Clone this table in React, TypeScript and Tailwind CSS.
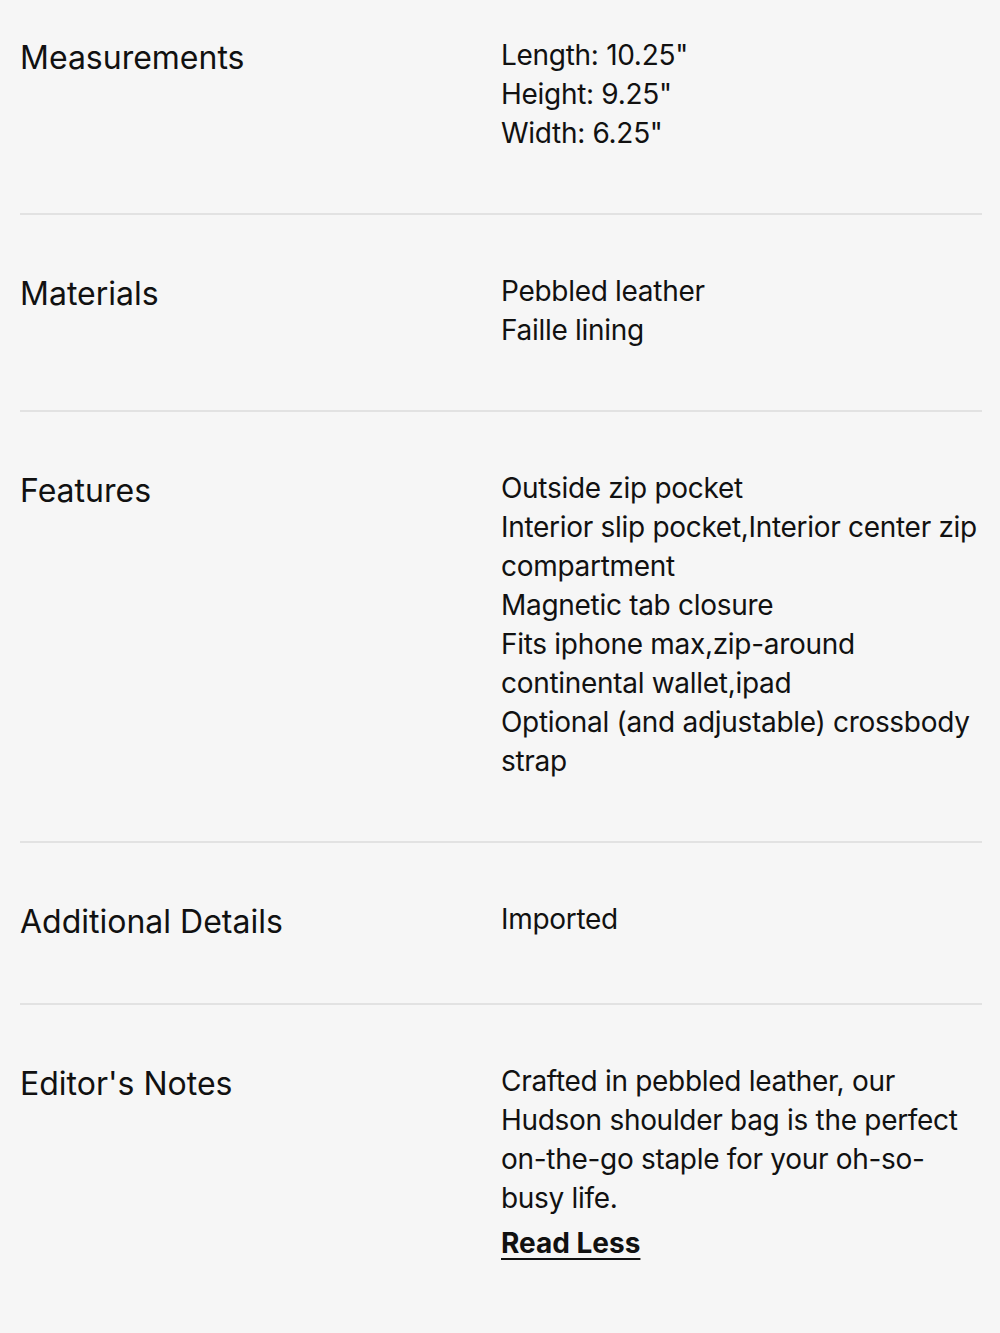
import type { ReactNode } from "react";

type Spec = {
    label: string;
    lines: string[];
    extra?: ReactNode;
};

const specs: Spec[] = [
    {
        label: "Measurements",
        lines: ['Length: 10.25"', 'Height: 9.25"', 'Width: 6.25"'],
    },
    {
        label: "Materials",
        lines: ["Pebbled leather", "Faille lining"],
    },
    {
        label: "Features",
        lines: [
            "Outside zip pocket",
            "Interior slip pocket,Interior center zip compartment",
            "Magnetic tab closure",
            "Fits iphone max,zip-around continental wallet,ipad",
            "Optional (and adjustable) crossbody strap",
        ],
    },
    {
        label: "Additional Details",
        lines: ["Imported"],
    },
    {
        label: "Editor's Notes",
        lines: [
            "Crafted in pebbled leather, our Hudson shoulder bag is the perfect on-the-go staple for your oh-so-busy life.",
        ],
        extra: (
            <a
                href="#"
                className="mt-[6px] block font-bold tracking-[0px] underline decoration-2 underline-offset-[5px]"
            >
                Read Less
            </a>
        ),
    },
];

export default function App() {
    return (
        <div className="min-h-screen bg-[#f6f6f6] pl-[20px] pr-[18px] text-[#111] font-['Inter','Liberation_Sans',sans-serif]">
            {specs.map((spec, i) => {
                const isLast = i === specs.length - 1;
                return (
                    <div
                        key={spec.label}
                        className={`grid grid-cols-[481px_1fr] items-start pb-[60px] ${
                            i === 0 ? "pt-[36px]" : "pt-[57px]"
                        } ${isLast ? "" : "border-b-2 border-[#e2e2e2]"}`}
                    >
                        {/* label */}
                        <h3 className="text-[32px] leading-[43px] font-normal tracking-[0px]">
                            {spec.label}
                        </h3>
                        {/* values */}
                        <div className="text-[28px] leading-[39px] tracking-[-0.3px]">
                            {spec.lines.map((line) => (
                                <p key={line}>{line}</p>
                            ))}
                            {spec.extra}
                        </div>
                    </div>
                );
            })}
        </div>
    );
}
